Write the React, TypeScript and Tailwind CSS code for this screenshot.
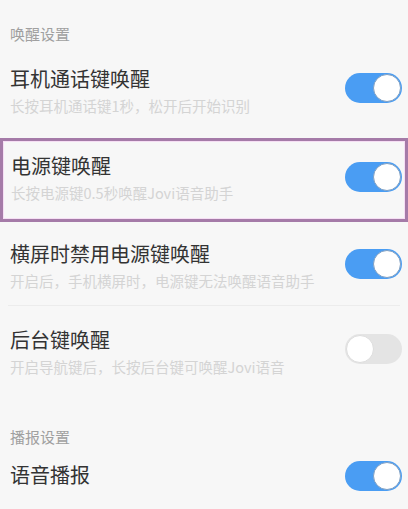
const FONT = '"Noto Sans CJK SC", "Noto Sans", sans-serif';

function Toggle({ on, className = "" }: { on: boolean; className?: string }) {
  return (
    <div
      className={`w-[57px] h-[30px] rounded-full p-[1px] flex shrink-0 ${
        on ? "bg-[#4a9df3] justify-end" : "bg-[#e4e4e4] justify-start"
      } ${className}`}
    >
      <div
        className={`w-[28px] h-[28px] rounded-full bg-white border-[1.5px] ${
          on ? "border-[#7f9fc2]" : "border-[#dddddd]"
        }`}
      />
    </div>
  );
}

function Texts({ title, sub }: { title: string; sub?: string }) {
  return (
    <div className="flex flex-col">
      <div className="text-[20px] leading-[26px] text-[#333333]">{title}</div>
      {sub && (
        <div className="mt-[4px] text-[14.5px] leading-[20px] text-[#d4d4d4]">{sub}</div>
      )}
    </div>
  );
}

export default function App() {
  return (
    <div className="w-[408px] h-[509px] overflow-hidden bg-[#f7f7f7]" style={{ fontFamily: FONT }}>
      {/* 唤醒设置 */}
      <div className="px-[10px] pt-[24px] pb-[7px] text-[15px] leading-[20px] text-[#a0a0a0]">
        唤醒设置
      </div>

      <div className="h-[87px] flex items-start justify-between pl-[10px] pr-[6px] pt-[15px]">
        <Texts title="耳机通话键唤醒" sub="长按耳机通话键1秒，松开后开始识别" />
        <Toggle on className="mt-[7px]" />
      </div>

      <div className="h-[84px] flex items-start justify-between border-[3px] border-[#a57ba8] shadow-[inset_0_0_0_1px_#f6def4] pl-[8px] pr-[3px] pt-[12px]">
        <Texts title="电源键唤醒" sub="长按电源键0.5秒唤醒Jovi语音助手" />
        <Toggle on className="mt-[9px]" />
      </div>

      <div className="h-[83px] flex items-start justify-between pl-[10px] pr-[6px] pt-[19px]">
        <Texts title="横屏时禁用电源键唤醒" sub="开启后，手机横屏时，电源键无法唤醒语音助手" />
        <Toggle on className="mt-[8px]" />
      </div>
      <div className="h-px mx-[8px] bg-[#ececec]" />

      <div className="h-[92px] flex items-start justify-between pl-[10px] pr-[6px] pt-[21px]">
        <Texts title="后台键唤醒" sub="开启导航键后，长按后台键可唤醒Jovi语音" />
        <Toggle on={false} className="mt-[7px]" />
      </div>

      {/* 播报设置 */}
      <div className="px-[10px] pt-[29px] text-[15px] leading-[20px] text-[#a0a0a0]">播报设置</div>

      <div className="flex items-start justify-between pl-[10px] pr-[6px] pt-[15px]">
        <Texts title="语音播报" />
        <Toggle on className="mt-[-1px]" />
      </div>
    </div>
  );
}
